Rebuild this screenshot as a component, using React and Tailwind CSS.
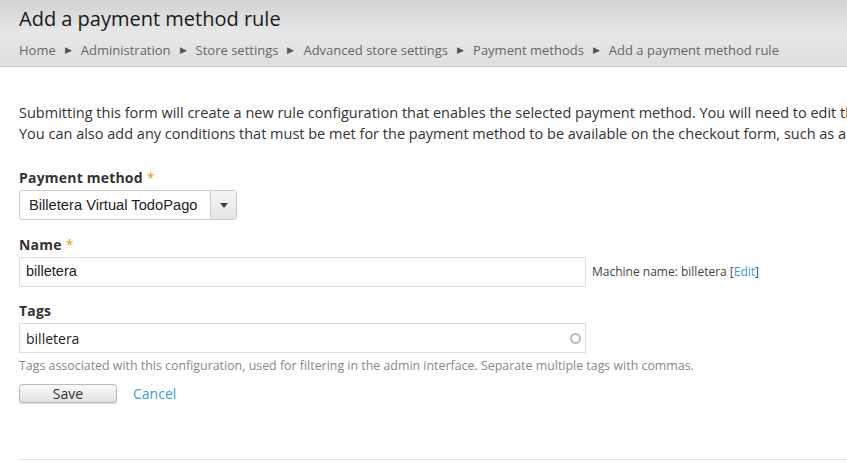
import React from 'react';

const crumbs = ['Home', 'Administration', 'Store settings', 'Advanced store settings', 'Payment methods'];

const Label = ({ children, required }) => (
  <label className="block text-[14px] font-bold text-[#333] leading-[18px] mb-[3px] tracking-[0.2px]">
    {children}
    {required && <span className="text-[#e29b2d] font-normal ml-[4px]">*</span>}
  </label>
);

export default function App() {
  return (
    <div className="w-[847px] h-[462px] overflow-hidden bg-white font-['Open_Sans',sans-serif] text-[#333]">
      <div className="h-[67px] bg-gradient-to-b from-[#d2d2d2] via-[#e8e8e8] to-[#dedede] border-b border-[#cfcfcf] px-[19px] pt-[5px]">
        <h1 className="text-[20px] leading-[28px] text-[#1a1a1a] font-normal">Add a payment method rule</h1>
        <div className="flex items-center text-[13px] text-[#666] mt-[8px] leading-[18px]">
          {crumbs.map((c) => (
            <React.Fragment key={c}>
              <span>{c}</span>
              <span className="text-[9px] mx-[9px] text-[#555]">▶</span>
            </React.Fragment>
          ))}
          <span>Add a payment method rule</span>
        </div>
      </div>

      <div className="px-[19px] pt-[35px]">
        <p className="text-[14.5px] leading-[21px] text-[#333] whitespace-nowrap">
          Submitting this form will create a new rule configuration that enables the selected payment method. You will need to edit the rule to add actions.
          <br />
          You can also add any conditions that must be met for the payment method to be available on the checkout form, such as a delivery address.
        </p>

        <div className="mt-[25px]">
          <Label required>Payment method</Label>
          <div className="flex w-[218px] h-[30px] border border-[#ccc] rounded-[3px] bg-white overflow-hidden">
            <div className="flex-1 flex items-center pl-[9px] text-[14.7px] text-[#222] font-['Liberation_Sans',Arial,sans-serif]">
              Billetera Virtual TodoPago
            </div>
            <div className="w-[26px] border-l border-[#ccc] bg-gradient-to-b from-[#f6f6f6] to-[#e4e4e4] flex items-center justify-center">
              <svg width="8" height="5" viewBox="0 0 8 5">
                <path d="M0 0h8L4 5z" fill="#444" />
              </svg>
            </div>
          </div>
        </div>

        <div className="mt-[16px]">
          <Label required>Name</Label>
          <div className="flex items-center">
            <div className="w-[567px] h-[30px] border border-[#ddd] flex items-center pl-[6px] text-[14.5px] text-[#222] font-['Liberation_Sans',Arial,sans-serif]">
              billetera
            </div>
            <span className="ml-[6px] text-[12px] text-[#444]">
              Machine name: billetera [<a className="text-[#3a9ae0]">Edit</a>]
            </span>
          </div>
        </div>

        <div className="mt-[15px]">
          <Label>Tags</Label>
          <div className="w-[567px] h-[30px] border border-[#ddd] flex items-center justify-between pl-[6px] pr-[4px] text-[14px] text-[#222]">
            <span>billetera</span>
            <span className="w-[11px] h-[11px] rounded-full border-2 border-[#bbb]"></span>
          </div>
          <div className="text-[12.4px] text-[#888] mt-[4px] leading-[17px]">
            Tags associated with this configuration, used for filtering in the admin interface. Separate multiple tags with commas.
          </div>
        </div>

        <div className="flex items-center mt-[9px]">
          <button className="w-[98px] h-[19px] border border-[#bbb] rounded-[3px] bg-gradient-to-b from-[#fafafa] to-[#e2e2e2] text-[14px] leading-[16px] text-[#333] shadow-[0_1px_1px_rgba(0,0,0,0.15)]">
            Save
          </button>
          <a className="ml-[16px] text-[14px] text-[#3a9ae0]">Cancel</a>
        </div>

        <div className="mt-[55px] -mr-[19px] border-t border-[#e4e4e4]"></div>
      </div>
    </div>
  );
}
